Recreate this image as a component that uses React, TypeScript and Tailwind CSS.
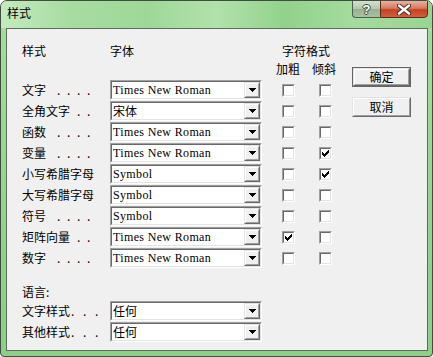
import React from "react";

const cjk = "font-['Noto_Sans_CJK_SC','Noto_Sans',sans-serif]";
const serif = "font-['Liberation_Serif','Noto_Sans_CJK_SC',serif]";

type Row = { label: string; font: string; bold: boolean; italic: boolean; dots: number };

const rows: Row[] = [
    { label: "文字", font: "Times New Roman", bold: false, italic: false, dots: 4 },
    { label: "全角文字", font: "宋体", bold: false, italic: false, dots: 2 },
    { label: "函数", font: "Times New Roman", bold: false, italic: false, dots: 4 },
    { label: "变量", font: "Times New Roman", bold: false, italic: true, dots: 4 },
    { label: "小写希腊字母", font: "Symbol", bold: false, italic: true, dots: 0 },
    { label: "大写希腊字母", font: "Symbol", bold: false, italic: false, dots: 0 },
    { label: "符号", font: "Symbol", bold: false, italic: false, dots: 4 },
    { label: "矩阵向量", font: "Times New Roman", bold: true, italic: false, dots: 2 },
    { label: "数字", font: "Times New Roman", bold: false, italic: false, dots: 4 },
];

const DropButton = () => (
    <div className="w-[16px] h-full border border-t-[#e3e3e3] border-l-[#e3e3e3] border-b-[#696969] border-r-[#696969]">
        <div className="w-full h-full flex items-center justify-center bg-[#f0f0f0] border border-t-white border-l-white border-b-[#a0a0a0] border-r-[#a0a0a0]">
            <svg width="7" height="4" viewBox="0 0 7 4" shapeRendering="crispEdges">
                <rect x="0" y="0" width="7" height="1" fill="#000" />
                <rect x="1" y="1" width="5" height="1" fill="#000" />
                <rect x="2" y="2" width="3" height="1" fill="#000" />
                <rect x="3" y="3" width="1" height="1" fill="#000" />
            </svg>
        </div>
    </div>
);

const Combo = ({ value }: { value: string }) => {
    const isLatin = /^[A-Za-z ]+$/.test(value);
    return (
        <div className="w-[152px] h-[20px] border border-t-[#a0a0a0] border-l-[#a0a0a0] border-b-white border-r-white">
            <div className="w-full h-full flex bg-white border border-t-[#696969] border-l-[#696969] border-b-[#e3e3e3] border-r-[#e3e3e3]">
                <div
                    className={
                        isLatin
                            ? `flex-1 flex items-center pl-[1px] text-black ${serif} text-[12px] tracking-[0.35px]`
                            : `flex-1 flex items-center pl-[1px] text-black ${cjk} text-[12px]`
                    }
                >
                    {value}
                </div>
                <DropButton />
            </div>
        </div>
    );
};

const CheckMark = () => (
    <svg width="7" height="7" viewBox="0 0 7 7" shapeRendering="crispEdges">
        <rect x="6" y="0" width="1" height="1" fill="#000" />
        <rect x="5" y="1" width="2" height="1" fill="#000" />
        <rect x="0" y="2" width="1" height="1" fill="#000" />
        <rect x="4" y="2" width="3" height="1" fill="#000" />
        <rect x="0" y="3" width="2" height="1" fill="#000" />
        <rect x="3" y="3" width="3" height="1" fill="#000" />
        <rect x="0" y="4" width="5" height="1" fill="#000" />
        <rect x="1" y="5" width="3" height="1" fill="#000" />
        <rect x="2" y="6" width="1" height="1" fill="#000" />
    </svg>
);

const Check = ({ checked }: { checked: boolean }) => (
    <div className="w-[13px] h-[13px] border border-t-[#a0a0a0] border-l-[#a0a0a0] border-b-white border-r-white">
        <div className="w-full h-full flex items-center justify-center bg-white border border-t-[#696969] border-l-[#696969] border-b-[#e3e3e3] border-r-[#e3e3e3]">
            {checked && <CheckMark />}
        </div>
    </div>
);

const Dots = ({ n }: { n: number }) => (
    <div className={n === 4 ? "flex ml-[11px]" : "flex ml-[7px]"}>
        {Array.from({ length: n }).map((_, i) => (
            <span key={i} className="w-[10px]">.</span>
        ))}
    </div>
);

const PushButton = ({ label, isDefault }: { label: string; isDefault?: boolean }) => (
    <div className={isDefault ? "w-[59px] h-[20px] border border-[#646464]" : "w-[59px] h-[20px]"}>
        <div className="w-full h-full border border-t-[#e3e3e3] border-l-[#e3e3e3] border-b-[#696969] border-r-[#696969]">
            <div className="w-full h-full flex items-center justify-center bg-[#f0f0f0] border border-t-white border-l-white border-b-[#a0a0a0] border-r-[#a0a0a0] text-[12px] text-black">
                {label}
            </div>
        </div>
    </div>
);

export default function App() {
    return (
        <div className={`w-[433px] h-[357px] bg-white ${cjk}`}>
            <div className="w-[433px] h-[357px] flex flex-col rounded-t-[7px] rounded-b-[4px] border border-[#3f4f3f] bg-[linear-gradient(180deg,#a9dca3_0%,#93d38d_60%,#8ccf86_100%)] overflow-hidden">
                {/* title bar */}
                <div className="h-[27px] flex justify-between bg-[linear-gradient(90deg,#c6eac0_0%,#a7dca1_16%,#9ed898_34%,#b2e1ac_50%,#92d28c_66%,#a5db9f_82%,#98d592_100%)]">
                    <div className="pl-[6px] pt-[4px] text-[12px] leading-[16px] text-black">样式</div>
                    <div className="flex h-[18px] mr-[4px] -mt-[1px]">
                        <div className="w-[28px] h-full flex items-center justify-center rounded-bl-[4px] border border-r-0 border-[#4e5f4e] bg-[linear-gradient(180deg,#d3e1cf_0%,#b3c8ae_48%,#98b193_52%,#a9c2a4_100%)] text-white text-[13px] font-bold leading-none [text-shadow:-1px_0_#384538,1px_0_#384538,0_-1px_#384538,0_1px_#384538] font-['Liberation_Sans',sans-serif]">
                            ?
                        </div>
                        <div className="w-[48px] h-full flex items-center justify-center rounded-br-[4px] border border-[#5a2a20] bg-[linear-gradient(180deg,#eab1a2_0%,#d97a60_45%,#c4411f_55%,#d2603c_100%)]">
                            <svg width="14" height="11" viewBox="0 0 14 11">
                                <path d="M2 1.5 L12 9.5 M12 1.5 L2 9.5" stroke="#3b2a26" strokeWidth="4.2" strokeLinecap="round" />
                                <path d="M2 1.5 L12 9.5 M12 1.5 L2 9.5" stroke="#ffffff" strokeWidth="2.4" strokeLinecap="round" />
                            </svg>
                        </div>
                    </div>
                </div>

                {/* client area */}
                <div className="flex-1 ml-[5px] mr-[4px] mb-[5px] border border-[#5b6d5b] bg-[#f0f0f0] text-[12px] leading-[16px] text-black flex">
                    <div className="flex flex-col">
                        <div className="flex pl-[15px] pt-[14px]">
                            <div className="w-[88px]">样式</div>
                            <div className="w-[160px]">字体</div>
                            <div className="w-[72px] text-center">字符格式</div>
                        </div>
                        <div className="flex pl-[15px] mt-[2px]">
                            <div className="w-[248px]" />
                            <div className="w-[36px] text-center">加粗</div>
                            <div className="w-[36px] text-center">倾斜</div>
                        </div>
                        <div className="flex flex-col mt-[3px]">
                            {rows.map((r) => (
                                <div key={r.label} className="h-[21px] flex items-start pl-[15px]">
                                    <div className="w-[88px] h-[20px] flex items-center">
                                        <span className="shrink-0">{r.label}</span>
                                        {r.dots > 0 && <Dots n={r.dots} />}
                                    </div>
                                    <Combo value={r.font} />
                                    <div className="h-[20px] flex items-center ml-[20px]">
                                        <Check checked={r.bold} />
                                    </div>
                                    <div className="h-[20px] flex items-center ml-[24px]">
                                        <Check checked={r.italic} />
                                    </div>
                                </div>
                            ))}
                        </div>
                        <div className="pl-[15px] mt-[15px]">语言:</div>
                        <div className="flex flex-col mt-[1px]">
                            {["文字样式", "其他样式"].map((l) => (
                                <div key={l} className="h-[21px] flex items-start pl-[15px]">
                                    <div className="w-[88px] h-[20px] flex items-center">
                                        <span className="shrink-0">{l}</span>
                                        <div className="flex ml-[1px]">
                                            <span className="w-[12px]">.</span>
                                            <span className="w-[12px]">.</span>
                                            <span className="w-[12px]">.</span>
                                        </div>
                                    </div>
                                    <Combo value="任何" />
                                </div>
                            ))}
                        </div>
                    </div>
                    <div className="flex flex-col gap-[10px] ml-[10px] mt-[38px]">
                        <PushButton label="确定" isDefault />
                        <PushButton label="取消" />
                    </div>
                </div>
            </div>
        </div>
    );
}
